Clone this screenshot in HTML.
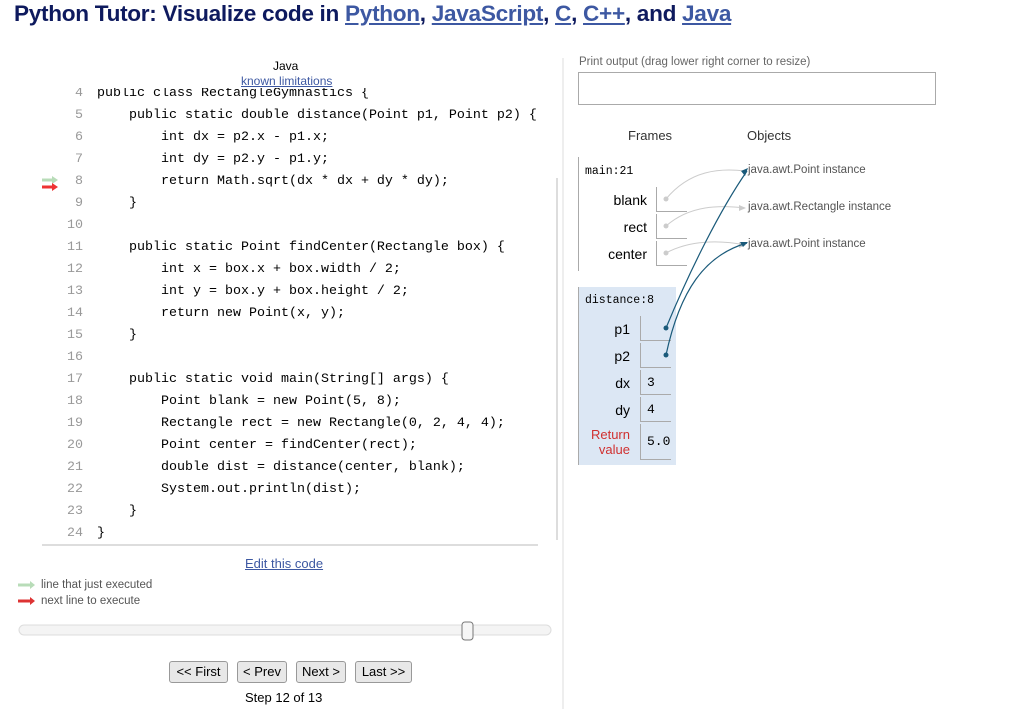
<!DOCTYPE html>
<html><head><meta charset="utf-8"><style>
body{margin:0;width:1012px;height:709px;background:#fff;font-family:"Liberation Sans",sans-serif;position:relative;overflow:hidden}
.a{position:absolute;white-space:pre}
h1{position:absolute;left:14px;top:1px;margin:0;font-size:22.6px;font-weight:bold;color:#0e1a5e;white-space:nowrap;letter-spacing:-0.3px}
h1 a{color:#3d58a2;text-decoration:underline}
.code{font-family:"Liberation Mono",monospace;font-size:13.33px;color:#000}
.ln{color:#999;text-align:right;width:30px;left:53px}
.lbl{font-size:14px;color:#000;text-align:right;width:60px}
.box{position:absolute;border-left:1px solid #aaa;border-bottom:1px solid #aaa;width:24px;height:24px;font-family:"Liberation Mono",monospace;font-size:13px;padding-left:6px;line-height:26px}
.btn{position:absolute;top:661px;height:20px;border:1px solid #999;border-radius:3px;background:#e8e8e8;font-size:13px;line-height:20px;text-align:center}
</style></head><body>
<h1>Python Tutor: Visualize code in <a>Python</a>, <a>JavaScript</a>, <a>C</a>, <a>C++</a>, and <a>Java</a></h1>
<div class="a" style="left:273px;top:59px;font-size:12px">Java</div>
<div class="a" style="left:241px;top:74px;font-size:12px;color:#3d58a2;text-decoration:underline">known limitations</div>
<div style="position:absolute;left:0;top:88px;width:560px;height:460px;overflow:hidden">
<div style="position:absolute;left:0;top:-86px">
<div class="a code ln" style="top:84px">4</div><div class="a code" style="left:97px;top:84px">public class RectangleGymnastics {</div>
<div class="a code ln" style="top:106px">5</div><div class="a code" style="left:97px;top:106px">    public static double distance(Point p1, Point p2) {</div>
<div class="a code ln" style="top:128px">6</div><div class="a code" style="left:97px;top:128px">        int dx = p2.x - p1.x;</div>
<div class="a code ln" style="top:150px">7</div><div class="a code" style="left:97px;top:150px">        int dy = p2.y - p1.y;</div>
<div class="a code ln" style="top:172px">8</div><div class="a code" style="left:97px;top:172px">        return Math.sqrt(dx * dx + dy * dy);</div>
<div class="a code ln" style="top:194px">9</div><div class="a code" style="left:97px;top:194px">    }</div>
<div class="a code ln" style="top:216px">10</div>
<div class="a code ln" style="top:238px">11</div><div class="a code" style="left:97px;top:238px">    public static Point findCenter(Rectangle box) {</div>
<div class="a code ln" style="top:260px">12</div><div class="a code" style="left:97px;top:260px">        int x = box.x + box.width / 2;</div>
<div class="a code ln" style="top:282px">13</div><div class="a code" style="left:97px;top:282px">        int y = box.y + box.height / 2;</div>
<div class="a code ln" style="top:304px">14</div><div class="a code" style="left:97px;top:304px">        return new Point(x, y);</div>
<div class="a code ln" style="top:326px">15</div><div class="a code" style="left:97px;top:326px">    }</div>
<div class="a code ln" style="top:348px">16</div>
<div class="a code ln" style="top:370px">17</div><div class="a code" style="left:97px;top:370px">    public static void main(String[] args) {</div>
<div class="a code ln" style="top:392px">18</div><div class="a code" style="left:97px;top:392px">        Point blank = new Point(5, 8);</div>
<div class="a code ln" style="top:414px">19</div><div class="a code" style="left:97px;top:414px">        Rectangle rect = new Rectangle(0, 2, 4, 4);</div>
<div class="a code ln" style="top:436px">20</div><div class="a code" style="left:97px;top:436px">        Point center = findCenter(rect);</div>
<div class="a code ln" style="top:458px">21</div><div class="a code" style="left:97px;top:458px">        double dist = distance(center, blank);</div>
<div class="a code ln" style="top:480px">22</div><div class="a code" style="left:97px;top:480px">        System.out.println(dist);</div>
<div class="a code ln" style="top:502px">23</div><div class="a code" style="left:97px;top:502px">    }</div>
<div class="a code ln" style="top:524px">24</div><div class="a code" style="left:97px;top:524px">}</div>
</div></div>
<svg class="a" style="left:0;top:0" width="1012" height="709">
<path d="M42 180h12" stroke="#b8dcb8" stroke-width="3"/><path d="M52 176l6 4-6 4z" fill="#b8dcb8"/>
<path d="M42 187h12" stroke="#e33" stroke-width="3"/><path d="M52 183l6 4-6 4z" fill="#e33"/>
<path d="M18 585h13" stroke="#b8dcb8" stroke-width="3"/><path d="M30 581l5 4-5 4z" fill="#b8dcb8"/>
<path d="M18 601h13" stroke="#d33" stroke-width="3"/><path d="M30 597l5 4-5 4z" fill="#d33"/>
<line x1="557" y1="178" x2="557" y2="540" stroke="#ddd" stroke-width="2"/>
<line x1="42" y1="545" x2="538" y2="545" stroke="#bbb"/>
<line x1="563" y1="58" x2="563" y2="709" stroke="#ddd"/>
<rect x="19" y="625" width="532" height="10" rx="5" fill="#f4f4f4" stroke="#ddd"/>
<rect x="462" y="622" width="11" height="18" rx="3" fill="#f6f6f6" stroke="#777"/>
</svg>
<div class="a" style="left:245px;top:556px;font-size:13px;color:#3d58a2;text-decoration:underline">Edit this code</div>
<div class="a" style="left:41px;top:579px;font-size:11.5px;color:#555">line that just executed</div>
<div class="a" style="left:41px;top:595px;font-size:11.5px;color:#555">next line to execute</div>
<div class="btn" style="left:169px;width:57px">&lt;&lt; First</div>
<div class="btn" style="left:237px;width:48px">&lt; Prev</div>
<div class="btn" style="left:296px;width:48px">Next &gt;</div>
<div class="btn" style="left:355px;width:55px">Last &gt;&gt;</div>
<div class="a" style="left:245px;top:690px;font-size:13px">Step 12 of 13</div>

<div class="a" style="left:579px;top:56px;font-size:11.5px;color:#666">Print output (drag lower right corner to resize)</div>
<div class="a" style="left:578px;top:72px;width:356px;height:31px;border:1px solid #aaa"></div>
<div class="a" style="left:628px;top:128px;font-size:13px;color:#333">Frames</div>
<div class="a" style="left:747px;top:128px;font-size:13px;color:#333">Objects</div>

<div class="a" style="left:578px;top:157px;width:1px;height:114px;background:#aaa"></div>
<div class="a" style="left:585px;top:165px;font-family:'Liberation Mono',monospace;font-size:11.5px">main:21</div>
<div class="a lbl" style="left:587px;top:192px">blank</div><div class="box" style="left:656px;top:187px"></div>
<div class="a lbl" style="left:587px;top:219px">rect</div><div class="box" style="left:656px;top:214px"></div>
<div class="a lbl" style="left:587px;top:246px">center</div><div class="box" style="left:656px;top:241px"></div>

<div class="a" style="left:578px;top:287px;width:97px;height:178px;background:#dce7f4;border-left:1px solid #aaa"></div>
<div class="a" style="left:585px;top:294px;font-family:'Liberation Mono',monospace;font-size:11.5px">distance:8</div>
<div class="a lbl" style="left:570px;top:321px">p1</div><div class="box" style="left:640px;top:316px"></div>
<div class="a lbl" style="left:570px;top:348px">p2</div><div class="box" style="left:640px;top:343px"></div>
<div class="a lbl" style="left:570px;top:375px">dx</div><div class="box" style="left:640px;top:370px">3</div>
<div class="a lbl" style="left:570px;top:402px">dy</div><div class="box" style="left:640px;top:397px">4</div>
<div class="a" style="left:580px;top:427px;width:50px;font-size:13px;color:#d03030;text-align:right;line-height:15px">Return<br>value</div>
<div class="box" style="left:640px;top:424px;height:35px;line-height:36px">5.0</div>

<div class="a" style="left:748px;top:164px;font-size:11.5px;color:#555">java.awt.Point instance</div>
<div class="a" style="left:748px;top:201px;font-size:11.5px;color:#555">java.awt.Rectangle instance</div>
<div class="a" style="left:748px;top:238px;font-size:11.5px;color:#555">java.awt.Point instance</div>

<svg class="a" style="left:0;top:0" width="1012" height="709">
<g fill="#ccc"><circle cx="666" cy="199" r="2.5"/><circle cx="666" cy="226" r="2.5"/><circle cx="666" cy="253" r="2.5"/></g>
<g stroke="#ccc" fill="none" stroke-width="1"><path d="M666 199C690 170 720 168 745 171"/><path d="M666 226C690 205 720 205 745 208"/><path d="M666 253C690 240 720 240 745 245"/></g>
<g fill="#ccc"><path d="M746 208l-7-3v6z"/><path d="M746 245l-7-3v6z"/></g>
<g stroke="#1a5a7a" fill="none" stroke-width="1.2"><path d="M666 328C690 270 720 210 747 171"/><path d="M666 355C680 290 705 255 747 243"/></g>
<g fill="#1a5a7a"><circle cx="666" cy="328" r="2.5"/><circle cx="666" cy="355" r="2.5"/><path d="M748 168l-7 3 4 5z"/><path d="M748 242l-8 0 3 5z"/></g>
</svg>
</body></html>
